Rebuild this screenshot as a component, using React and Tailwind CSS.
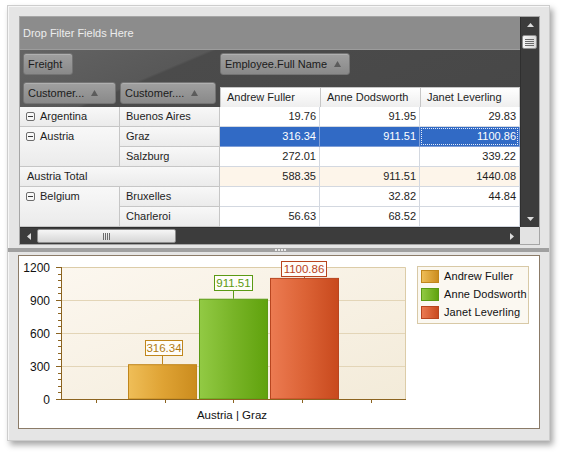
import React from 'react';

const MinusBox = () => (
  <svg width="9" height="9" viewBox="0 0 9 9" className="shrink-0">
    <rect x="0.5" y="0.5" width="8" height="8" rx="1.5" fill="#f7f7f7" stroke="#6e6e6e" />
    <path d="M2 4.5h5" stroke="#3a3a3a" />
  </svg>
);

const SortArrow = () => (
  <svg width="7" height="6" viewBox="0 0 7 6" className="shrink-0">
    <path d="M3.5 0L7 6H0z" fill="#5c5c5c" />
  </svg>
);

const Tri = ({ dir }) => {
  const d = {
    up: 'M3.5 0L7 4H0z',
    down: 'M0 0h7L3.5 4z',
    left: 'M4 0v7L0 3.5z',
    right: 'M0 0l4 3.5L0 7z',
  }[dir];
  const w = dir === 'up' || dir === 'down' ? 7 : 4;
  const h = dir === 'up' || dir === 'down' ? 4 : 7;
  return (
    <svg width={w} height={h} viewBox={`0 0 ${w} ${h}`}>
      <path d={d} fill="#dcdcdc" />
    </svg>
  );
};

const FieldButton = ({ label, arrow, className }) => (
  <div
    className={`flex h-[22px] shrink-0 items-center gap-[7px] rounded-[3px] border border-[#747474] bg-[linear-gradient(#a0a0a0,#898989)] pl-[4px] text-[#1b1b1b] shadow-[inset_0_1px_0_#b0b0b0] ${className}`}
  >
    <span>{label}</span>
    {arrow && <SortArrow />}
  </div>
);

const RowHead = ({ children, minus, className = '' }) => (
  <div
    className={`border-b border-r border-[#c6c6c6] bg-[linear-gradient(#f8f8f8,#ebebeb)] text-[#1e1e1e] ${className}`}
  >
    <div className="flex h-[19px] items-center gap-[5px]">
      {minus && <MinusBox />}
      <span>{children}</span>
    </div>
  </div>
);

const DataCell = ({ v, tone, focus }) => {
  let cls = 'bg-white text-[#1e1e1e] border-[#d3d8e0]';
  if (tone === 'sel') cls = 'bg-[#316ac5] text-white border-[#7f9ed6]';
  if (tone === 'total') cls = 'bg-[#fdf5ea] text-[#1e1e1e] border-[#d3d8e0]';
  return (
    <div className={`relative flex h-[20px] items-center justify-end border-b border-r pr-[3px] ${cls}`}>
      {focus && (
        <div className="absolute inset-[1px] border border-dotted border-[#e6ecf8]" />
      )}
      <span className="relative">{v}</span>
    </div>
  );
};

const HeaderCell = ({ children, last }) => (
  <div
    className={`flex h-[20px] w-[100px] items-center border-l border-t border-[#c6c6c6] bg-[linear-gradient(#ffffff,#eeeeee)] pl-[6px] text-[#1e1e1e] ${last ? 'border-r' : ''}`}
  >
    {children}
  </div>
);

const bars = [
  { name: 'Andrew Fuller', v: 316.34, x: 109, grad: 'gA', from: '#efbe58', to: '#cb8c1e', stroke: '#c0861c', text: '#b07a12', box: [126, 84, 37] },
  { name: 'Anne Dodsworth', v: 911.51, x: 180, grad: 'gB', from: '#92ca44', to: '#60a20d', stroke: '#5b9a14', text: '#5b9a0f', box: [195, 19, 38] },
  { name: 'Janet Leverling', v: 1100.86, x: 251, grad: 'gC', from: '#ec7b52', to: '#c8491d', stroke: '#b8451f', text: '#b9441d', box: [262, 5, 45] },
];

const Chart = () => {
  const y = (v) => 143 - v * 0.11;
  const minor = [];
  for (let v = 60; v < 1200; v += 60) {
    if (v % 300 !== 0) minor.push(v);
  }
  return (
    <svg width="398" height="172" viewBox="0 0 398 172" className="shrink-0">
      <defs>
        <linearGradient id="plotBg" x1="0" y1="0" x2="1" y2="1">
          <stop offset="0" stopColor="#fcf7ef" />
          <stop offset="1" stopColor="#f3ebd9" />
        </linearGradient>
        <linearGradient id="gA" x1="0" x2="1" y1="0" y2="0">
          <stop offset="0" stopColor="#efbe58" />
          <stop offset="0.5" stopColor="#dfa334" />
          <stop offset="1" stopColor="#cb8c1e" />
        </linearGradient>
        <linearGradient id="gB" x1="0" x2="1" y1="0" y2="0">
          <stop offset="0" stopColor="#92ca44" />
          <stop offset="0.5" stopColor="#78b427" />
          <stop offset="1" stopColor="#60a20d" />
        </linearGradient>
        <linearGradient id="gC" x1="0" x2="1" y1="0" y2="0">
          <stop offset="0" stopColor="#ec7b52" />
          <stop offset="0.5" stopColor="#dc6336" />
          <stop offset="1" stopColor="#c8491d" />
        </linearGradient>
      </defs>
      <rect x="43" y="11" width="344" height="132" fill="url(#plotBg)" />
      <path d="M43 11.5H386.5V143" fill="none" stroke="#dccca8" />
      {[300, 600, 900].map((v) => (
        <path key={v} d={`M43 ${y(v) + 0.5}H386`} stroke="#e3d5b7" />
      ))}
      {bars.map((b) => {
        const top = y(b.v);
        const cx = b.x + 34.5;
        const [bx, by, bw] = b.box;
        return (
          <g key={b.name}>
            <rect x={b.x + 0.5} y={top + 0.5} width="68" height={143 - top - 0.5} fill={`url(#${b.grad})`} stroke={b.stroke} />
            <path d={`M${cx} ${by + 15}V${top}`} stroke={b.stroke} />
            <rect x={bx + 0.5} y={by + 0.5} width={bw} height="15" fill="#fffdf9" stroke={b.stroke} />
            <text
              x={bx + bw / 2 + 0.5}
              y={by + 12}
              textAnchor="middle"
              fontSize="11.5"
              fill={b.text}
              fontFamily="Liberation Sans, Arial, sans-serif"
            >
              {b.v.toFixed(2)}
            </text>
          </g>
        );
      })}
      <path d="M42.5 11V143.5" stroke="#8c6420" />
      <path d="M37 143.5H387" stroke="#8c6420" />
      {[0, 300, 600, 900, 1200].map((v) => (
        <g key={v}>
          <path d={`M37 ${y(v) + 0.5}H42`} stroke="#8c6420" />
          <text
            x="31"
            y={y(v) + 5}
            textAnchor="end"
            fontSize="12"
            fill="#111"
            fontFamily="Liberation Sans, Arial, sans-serif"
          >
            {v}
          </text>
        </g>
      ))}
      {minor.map((v) => (
        <path key={v} d={`M39 ${Math.round(y(v)) + 0.5}H42`} stroke="#8c6420" />
      ))}
      {[77.5, 146.5, 214.5, 283.5, 352.5].map((x) => (
        <path key={x} d={`M${x} 143V147`} stroke="#8c6420" />
      ))}
      <text x="213" y="163" textAnchor="middle" fontSize="11.5" fill="#111" fontFamily="Liberation Sans, Arial, sans-serif">
        Austria | Graz
      </text>
    </svg>
  );
};

const Legend = () => (
  <div className="mt-[10px] flex h-[58px] w-[112px] shrink-0 flex-col gap-[5px] border border-[#d8c9a6] bg-[#fbf8f1] pl-[3px] pt-[3px]">
    {bars.map((b) => (
      <div key={b.name} className="flex h-[13px] items-center gap-[5px]">
        <svg width="18" height="13" viewBox="0 0 18 13" className="shrink-0">
          <defs>
            <linearGradient id={`lg${b.grad}`} x1="0" x2="1" y1="0" y2="0">
              <stop offset="0" stopColor={b.from} />
              <stop offset="1" stopColor={b.to} />
            </linearGradient>
          </defs>
          <rect x="0.5" y="0.5" width="17" height="12" fill={`url(#lg${b.grad})`} stroke={b.stroke} />
        </svg>
        <span className="whitespace-nowrap text-[11px] tracking-[0.1px] text-[#111]">{b.name}</span>
      </div>
    ))}
  </div>
);

export default function App() {
  return (
    <div className="h-[456px] w-[564px] bg-white pl-[7px] pt-[5px] font-['Liberation_Sans',Arial,sans-serif] text-[11px] leading-none">
      <div className="flex h-[436px] w-[543px] flex-col border border-[#cdcdcd] bg-[#e5e5e5] shadow-[inset_1px_1px_0_#f6f6f6,3px_4px_6px_rgba(0,0,0,0.35)]">
        {/* Pivot grid */}
        <div className="pl-[11px] pt-[10px]">
          <div className="flex h-[229px] w-[521px] flex-col border border-[#a6a6a6] bg-[#3b3b3b]">
            <div className="flex h-[210px]">
              <div className="flex w-[500px] flex-col">
                <div className="flex h-[33px] items-center border-b border-[#9c9c9c] bg-[#8c8c8c] pl-[3px] text-[#ececec]">
                  Drop Filter Fields Here
                </div>
                <div className="flex h-[57px] bg-[linear-gradient(157deg,#646464_0%,#585858_30%,#4b4b4b_31%,#474747_100%)]">
                  <div className="flex w-[200px] flex-col pl-[3px] pt-[3px]">
                    <FieldButton label="Freight" className="w-[50px]" />
                    <div className="mt-[7px] flex gap-[4px]">
                      <FieldButton label="Customer..." arrow className="w-[93px]" />
                      <FieldButton label="Customer...." arrow className="w-[96px]" />
                    </div>
                  </div>
                  <div className="flex flex-col justify-between pt-[3px]">
                    <FieldButton label="Employee.Full Name" arrow className="w-[130px] gap-[5px]" />
                    <div className="flex">
                      <HeaderCell>Andrew Fuller</HeaderCell>
                      <HeaderCell>Anne Dodsworth</HeaderCell>
                      <HeaderCell last>Janet Leverling</HeaderCell>
                    </div>
                  </div>
                </div>
                <div className="h-[120px] overflow-hidden bg-white">
                  <div className="grid grid-cols-[100px_100px_100px_100px_100px] auto-rows-[20px]">
                    <RowHead minus className="pl-[6px]">Argentina</RowHead>
                    <RowHead className="pl-[6px]">Buenos Aires</RowHead>
                    <DataCell v="19.76" />
                    <DataCell v="91.95" />
                    <DataCell v="29.83" />

                    <RowHead minus className="row-span-2 pl-[6px]">Austria</RowHead>
                    <RowHead className="pl-[6px]">Graz</RowHead>
                    <DataCell v="316.34" tone="sel" />
                    <DataCell v="911.51" tone="sel" />
                    <DataCell v="1100.86" tone="sel" focus />

                    <RowHead className="pl-[6px]">Salzburg</RowHead>
                    <DataCell v="272.01" />
                    <DataCell v="" />
                    <DataCell v="339.22" />

                    <RowHead className="col-span-2 pl-[7px]">Austria Total</RowHead>
                    <DataCell v="588.35" tone="total" />
                    <DataCell v="911.51" tone="total" />
                    <DataCell v="1440.08" tone="total" />

                    <RowHead minus className="row-span-2 pl-[6px]">Belgium</RowHead>
                    <RowHead className="pl-[6px]">Bruxelles</RowHead>
                    <DataCell v="" />
                    <DataCell v="32.82" />
                    <DataCell v="44.84" />

                    <RowHead className="pl-[6px]">Charleroi</RowHead>
                    <DataCell v="56.63" />
                    <DataCell v="68.52" />
                    <DataCell v="" />
                  </div>
                </div>
              </div>
              {/* Vertical scrollbar */}
              <div className="flex w-[19px] flex-col border-l border-[#2f2f2f] bg-[#3c3c3c]">
                <div className="flex h-[16px] items-center justify-center">
                  <Tri dir="up" />
                </div>
                <div className="ml-[1px] mt-[2px] flex h-[14px] w-[15px] items-center justify-center rounded-[2px] border border-[#8e8e8e] bg-[linear-gradient(90deg,#f6f6f6,#d8d8d8)]">
                  <svg width="9" height="7" viewBox="0 0 9 7">
                    <path d="M0 0.5h9M0 2.5h9M0 4.5h9M0 6.5h9" stroke="#6a6a6a" />
                  </svg>
                </div>
                <div className="flex-1" />
                <div className="flex h-[16px] items-center justify-center">
                  <Tri dir="down" />
                </div>
              </div>
            </div>
            {/* Horizontal scrollbar */}
            <div className="flex h-[17px]">
              <div className="flex w-[500px] items-center border-t border-[#2f2f2f] bg-[#3c3c3c]">
                <div className="flex w-[17px] justify-center">
                  <Tri dir="left" />
                </div>
                <div className="flex h-[14px] w-[139px] items-center justify-center rounded-[2px] border border-[#8e8e8e] bg-[linear-gradient(#f6f6f6,#d6d6d6)]">
                  <svg width="7" height="7" viewBox="0 0 7 7">
                    <path d="M0.5 0v7M2.5 0v7M4.5 0v7M6.5 0v7" stroke="#6a6a6a" />
                  </svg>
                </div>
                <div className="flex-1" />
                <div className="flex w-[17px] justify-center">
                  <Tri dir="right" />
                </div>
              </div>
              <div className="w-[19px] bg-[#e3e3e3]" />
            </div>
          </div>
        </div>

        {/* Splitter */}
        <div className="mt-[3px] flex h-[4px] items-center justify-center bg-[#a0a0a0]">
          <div className="flex gap-[1px] pl-[4px]">
            <div className="h-[2px] w-[2px] bg-[#e8e8e8]" />
            <div className="h-[2px] w-[2px] bg-[#e8e8e8]" />
            <div className="h-[2px] w-[2px] bg-[#e8e8e8]" />
            <div className="h-[2px] w-[2px] bg-[#e8e8e8]" />
          </div>
        </div>

        {/* Chart */}
        <div className="ml-[10px] mt-[3px] flex h-[174px] w-[522px] border border-[#8b7b68] bg-white">
          <Chart />
          <Legend />
        </div>
      </div>
    </div>
  );
}
